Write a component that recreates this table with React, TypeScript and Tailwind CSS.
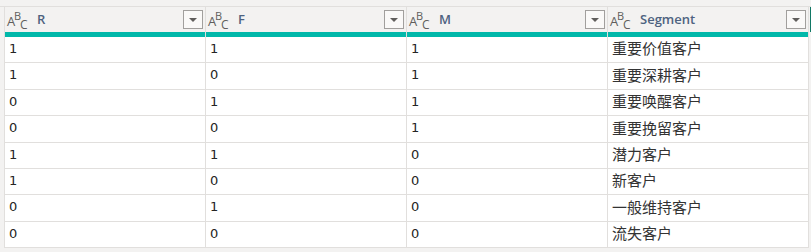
import React from "react";

const columns = ["R", "F", "M", "Segment"];

const rows: [string, string, string, string][] = [
  ["1", "1", "1", "重要价值客户"],
  ["1", "0", "1", "重要深耕客户"],
  ["0", "1", "1", "重要唤醒客户"],
  ["0", "0", "1", "重要挽留客户"],
  ["1", "1", "0", "潜力客户"],
  ["1", "0", "0", "新客户"],
  ["0", "1", "0", "一般维持客户"],
  ["0", "0", "0", "流失客户"],
];

const TypeIcon = () => (
  <span className="relative inline-block w-[22px] h-[22px] text-[#605e5c] font-['Open_Sans',sans-serif] leading-none">
    <span className="absolute left-0 top-[6px] text-[13px]">A</span>
    <span className="absolute left-[7px] top-[1px] text-[11px]">B</span>
    <span className="absolute left-[13px] top-[10px] text-[12px]">C</span>
  </span>
);

const DropButton = () => (
  <div className="w-[20px] h-[19px] border border-[#a19f9d] bg-[#faf9f8] flex items-center justify-center">
    <svg width="8" height="4" viewBox="0 0 8 4">
      <path d="M0 0 L8 0 L4 4 Z" fill="#605e5c" />
    </svg>
  </div>
);

export default function App() {
  return (
    <div className="w-[811px] h-[252px] bg-[#f3f2f1] overflow-hidden font-['Open_Sans','Noto_Sans_CJK_SC',sans-serif]">
      {/* top strip */}
      <div className="h-[7px] border-b border-[#e1dfdd]" />

      <div className="flex pl-[4px]">
        <div className="flex border-l border-[#e1dfdd]">
          {columns.map((col, ci) => (
            <div key={col} className="w-[201px] border-r border-[#e1dfdd] flex flex-col">
              {/* header */}
              <div className="h-[25px] flex items-center pl-[2px] pr-[2px] bg-[#f3f2f1]">
                <TypeIcon />
                <span className="ml-[8px] text-[13px] font-semibold text-[#4e6280]">{col}</span>
                <div className="ml-auto">
                  <DropButton />
                </div>
              </div>
              <div className="h-[5px] bg-[#01b8aa]" />
              {/* cells */}
              {rows.map((r, ri) => (
                <div
                  key={ri}
                  className="h-[26.4px] bg-white border-b border-[#e1dfdd] flex items-center pl-[4px] pb-[2px] text-[#252423]"
                >
                  {ci === 3 ? (
                    <span className="text-[15px] text-[#333333] font-['Noto_Sans_CJK_SC',sans-serif]">{r[ci]}</span>
                  ) : (
                    <span className="text-[13px] font-['DejaVu_Sans',sans-serif]">{r[ci]}</span>
                  )}
                </div>
              ))}
            </div>
          ))}
        </div>
        <div className="w-[2px] h-[25px] bg-[#117865] ml-[1px]" />
      </div>
    </div>
  );
}
